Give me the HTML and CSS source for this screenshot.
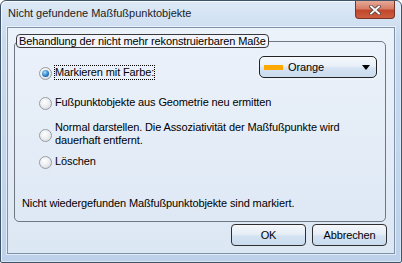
FILE: index.html
```html
<!DOCTYPE html>
<html lang="de">
<head>
  <meta charset="UTF-8">
  <title>Nicht gefundene Maßfußpunktobjekte</title>
  <link rel="stylesheet" href="styles.css">
</head>
<body>

<div class="window">
  <div class="titlebar">
    <span class="title">Nicht gefundene Maßfußpunktobjekte</span>
    <button class="close" aria-label="Schließen">
      <svg width="12" height="10" viewBox="0 0 12 10">
        <path d="M2 1.5 L10 8.5 M10 1.5 L2 8.5" stroke="#5b4a48" stroke-width="3.6" stroke-linecap="square"/>
        <path d="M2 1.5 L10 8.5 M10 1.5 L2 8.5" stroke="#fff" stroke-width="1.8" stroke-linecap="square"/>
      </svg>
    </button>
  </div>

  <div class="client">
    <fieldset class="group">
      <legend>Behandlung der nicht mehr rekonstruierbaren Maße</legend>

      <div class="options">
        <div class="row-first">
          <label class="radio">
            <span class="dot checked"></span>
            <span class="focus">Markieren mit Farbe:</span>
          </label>
          <div class="combo">
            <span class="swatch"></span>
            <span class="combo-text">Orange</span>
            <span class="arrow"></span>
          </div>
        </div>
        <label class="radio opt-geo"><span class="dot"></span>Fußpunktobjekte aus Geometrie neu ermitten</label>
        <label class="radio opt-normal"><span class="dot"></span>Normal darstellen. Die Assoziativität der Maßfußpunkte wird<br>dauerhaft entfernt.</label>
        <label class="radio opt-delete"><span class="dot"></span>Löschen</label>
      </div>

      <p class="note">Nicht wiedergefunden Maßfußpunktobjekte sind markiert.</p>
    </fieldset>

    <div class="buttons">
      <button class="btn">OK</button>
      <button class="btn">Abbrechen</button>
    </div>
  </div>
</div>

</body>
</html>
```

FILE: styles.css
```css
* {
  box-sizing: border-box;
  margin: 0;
  padding: 0;
}

body {
  font-family: "Liberation Sans", Arial, sans-serif;
  font-size: 11px;
  letter-spacing: -0.12px;
  color: #000;
  background: #fff;
}

.window {
  width: 402px;
  height: 263px;
  display: flex;
  flex-direction: column;
  padding: 0 6px 8px;
  border: 1px solid #3f5369;
  border-radius: 6px 6px 2px 2px;
  background: linear-gradient(180deg, #dde9f6 0, #c7daef 40px, #bdd2ea 100%);
  box-shadow: inset 1px 1px 0 rgba(255, 255, 255, 0.7), inset -1px -1px 0 rgba(255, 255, 255, 0.4);
}

.titlebar {
  height: 26px;
  display: flex;
  align-items: flex-start;
}

.title {
  margin: 6px 0 0 1px;
  line-height: 13px;
  letter-spacing: 0;
  color: #1c1c1c;
}

.close {
  margin-left: auto;
  width: 40px;
  height: 18px;
  display: flex;
  align-items: center;
  justify-content: center;
  border: 1px solid #7a3327;
  border-top: 0;
  border-radius: 0 0 4px 4px;
  background: linear-gradient(180deg, #e7a998 0, #d67e67 45%, #c2462c 55%, #cc5e40 100%);
}

.client {
  flex: 1;
  display: flex;
  flex-direction: column;
  padding: 6px 7px 7px 6px;
  border: 1px solid #7e93aa;
  background: linear-gradient(180deg, #ecf2fa 0, #dce7f4 100%);
  box-shadow: 0 0 0 1px rgba(255, 255, 255, 0.55);
}

.group {
  margin-right: 1px;
  padding: 0 0 11px;
  border: 1px solid #6f7782;
  border-radius: 5px;
}

.group legend {
  margin-left: 1px;
  padding: 0 2px;
  line-height: 12px;
  border: 1px solid #3a3a3a;
  border-radius: 4px;
  background: #f1f5fb;
}

.options {
  display: flex;
  flex-direction: column;
  padding-left: 24px;
}

.row-first {
  display: flex;
  justify-content: space-between;
  align-items: flex-start;
  margin-top: 8px;
  padding-right: 8px;
}

.row-first .radio {
  margin-top: 9px;
}

.radio {
  display: flex;
  align-items: center;
  line-height: 13px;
}

.opt-geo {
  margin-top: 15px;
}

.opt-normal {
  margin-top: 11px;
}

.opt-delete {
  margin-top: 7px;
}

.dot {
  position: relative;
  flex-shrink: 0;
  width: 13px;
  height: 13px;
  margin: 2px 3px 0 0;
  border: 1px solid #979ca2;
  border-radius: 50%;
  background: radial-gradient(circle at 40% 35%, #ffffff 0, #e8eaec 55%, #d0d3d7 100%);
}

/* selected dot sits over the ring */
.dot.checked::after {
  content: "";
  position: absolute;
  left: 2px;
  top: 2px;
  width: 7px;
  height: 7px;
  border-radius: 50%;
  background: radial-gradient(circle at 40% 35%, #a6e0fb 0, #2d7fc8 55%, #0f3f78 100%);
}

.focus {
  outline: 1px dotted #000;
}

.combo {
  width: 118px;
  height: 22px;
  display: flex;
  align-items: center;
  padding: 0 6px 0 4px;
  border: 1px solid #222;
  border-radius: 5px;
  background: linear-gradient(180deg, #f6f9fc 0, #e8eff8 45%, #d5e3f2 55%, #cbdcef 100%);
  box-shadow: 0 0 0 2px #edf3fa;
}

.swatch {
  width: 19px;
  height: 5px;
  margin-right: 5px;
  background: #ffa800;
}

.combo-text {
  flex: 1;
}

.arrow {
  width: 0;
  height: 0;
  border-left: 4px solid transparent;
  border-right: 4px solid transparent;
  border-top: 5px solid #000;
}

.note {
  margin: 28px 0 0 7px;
  line-height: 13px;
}

.buttons {
  margin-top: auto;
  display: flex;
  justify-content: flex-end;
  gap: 6px;
}

.btn {
  width: 75px;
  height: 22px;
  font-family: inherit;
  font-size: 11px;
  letter-spacing: inherit;
  color: #000;
  border: 1px solid #2f2f2f;
  border-radius: 4px;
  background: linear-gradient(180deg, #f5f8fb 0, #e7eef7 45%, #d4e3f2 55%, #c9dbef 100%);
}
```
